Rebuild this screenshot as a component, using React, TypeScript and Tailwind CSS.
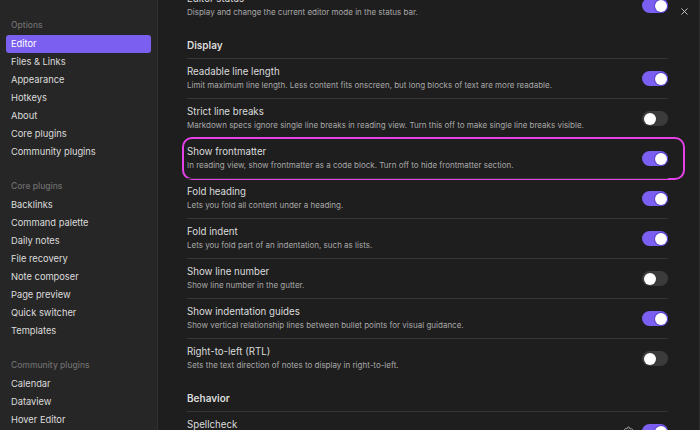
import { X, Settings } from "lucide-react";

const groups = [
  {
    title: "Options",
    items: ["Editor", "Files & Links", "Appearance", "Hotkeys", "About", "Core plugins", "Community plugins"],
  },
  {
    title: "Core plugins",
    items: ["Backlinks", "Command palette", "Daily notes", "File recovery", "Note composer", "Page preview", "Quick switcher", "Templates"],
  },
  {
    title: "Community plugins",
    items: ["Calendar", "Dataview", "Hover Editor"],
  },
];

type Setting = { name: string; desc: string; on: boolean; highlight?: boolean };

const display: Setting[] = [
  { name: "Readable line length", desc: "Limit maximum line length. Less content fits onscreen, but long blocks of text are more readable.", on: true },
  { name: "Strict line breaks", desc: "Markdown specs ignore single line breaks in reading view. Turn this off to make single line breaks visible.", on: false },
  { name: "Show frontmatter", desc: "In reading view, show frontmatter as a code block. Turn off to hide frontmatter section.", on: true, highlight: true },
  { name: "Fold heading", desc: "Lets you fold all content under a heading.", on: true },
  { name: "Fold indent", desc: "Lets you fold part of an indentation, such as lists.", on: true },
  { name: "Show line number", desc: "Show line number in the gutter.", on: false },
  { name: "Show indentation guides", desc: "Show vertical relationship lines between bullet points for visual guidance.", on: true },
  { name: "Right-to-left (RTL)", desc: "Sets the text direction of notes to display in right-to-left.", on: false },
];

function Toggle({ on }: { on: boolean }) {
  return (
    <div
      className={`flex h-[15px] w-[26px] shrink-0 items-center rounded-full px-[1.5px] ${
        on ? "justify-end bg-[#7b5ff0]" : "justify-start bg-[#3b3b3b]"
      }`}
    >
      <div className={`h-[12px] w-[12px] rounded-full bg-white ${on ? "ring-1 ring-[#5a3fd0]" : ""}`} />
    </div>
  );
}

function Row({ s, extra }: { s: Setting; extra?: React.ReactNode }) {
  return (
    <div className="relative">
      <div className="flex h-[40px] items-center justify-between border-t border-[#363636]">
        <div className="flex flex-col">
          <div className="text-[9.7px] leading-[14px] text-[#dcdcdc]">{s.name}</div>
          <div className="text-[8px] leading-[13px] text-[#a8a8a8]">{s.desc}</div>
        </div>
        <div className="flex items-center gap-[8px]">
          {extra}
          <Toggle on={s.on} />
        </div>
      </div>
      {s.highlight && (
        <div className="pointer-events-none absolute -top-[1px] -bottom-[2px] -left-[5px] -right-[17px] rounded-[10px] border-2 border-[#e442e8]" />
      )}
    </div>
  );
}

function Heading({ text }: { text: string }) {
  return (
    <div className="pt-[13px] pb-[6px] text-[10px] leading-[14px] font-semibold text-[#dcdcdc]">{text}</div>
  );
}

export default function App() {
  return (
    <div
      className="flex h-[430px] w-[700px] overflow-hidden bg-[#1e1e1e]"
      style={{ fontFamily: "Inter, 'Liberation Sans', sans-serif" }}
    >
      <aside className="flex w-[158px] shrink-0 flex-col border-r border-[#303030] bg-[#262626] px-[6px] pt-[16px]">
        {groups.map((g, gi) => (
          <div key={g.title} className={gi > 0 ? "mt-[16px]" : ""}>
            <div className="flex h-[19px] items-center px-[5px] text-[8.5px] font-medium text-[#6e6e6e]">{g.title}</div>
            {g.items.map((it) => (
              <div
                key={it}
                className={`flex h-[18px] items-center rounded-[3px] px-[5px] text-[9.3px] text-[#dcdcdc] ${
                  it === "Editor" && gi === 0 ? "bg-[#7b5ff0] text-white" : ""
                }`}
              >
                {it}
              </div>
            ))}
          </div>
        ))}
      </aside>

      <main className="relative flex-1 border-r border-[#2e2e2e] pl-[29px] pr-[31px]">
        <div className="-mt-[15px] flex flex-col">
          <Row s={{ name: "Editor status", desc: "Display and change the current editor mode in the status bar.", on: true }} />
          <Heading text="Display" />
          {display.map((s) => (
            <Row key={s.name} s={s} />
          ))}
          <Heading text="Behavior" />
          <Row
            s={{ name: "Spellcheck", desc: "Turn on the spellchecker.", on: true }}
            extra={<Settings size={11} strokeWidth={2} className="text-[#a8a8a8]" />}
          />
        </div>
        <button className="absolute right-[9px] top-[6px] text-[#cfcfcf]">
          <X size={11} strokeWidth={2} />
        </button>
      </main>
    </div>
  );
}
